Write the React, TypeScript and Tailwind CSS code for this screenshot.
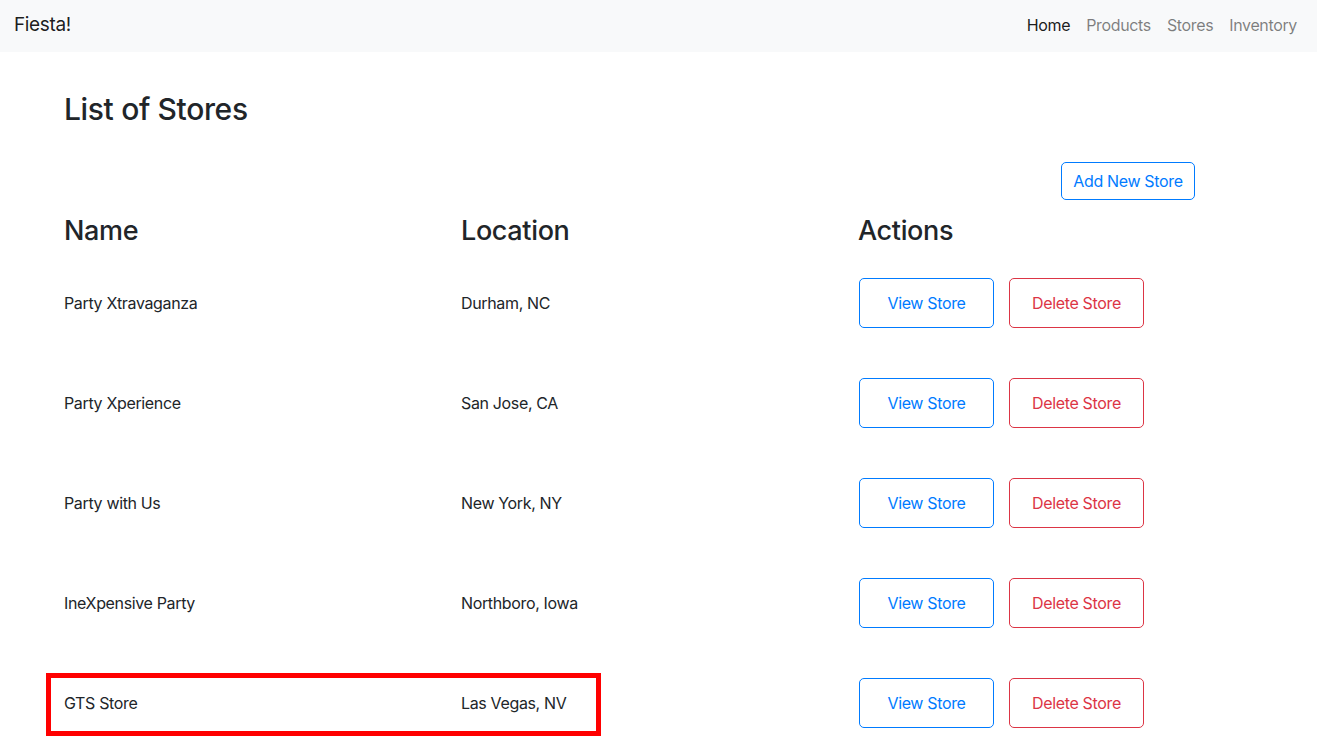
import React from "react";

const stores = [
  { name: "Party Xtravaganza", location: "Durham, NC" },
  { name: "Party Xperience", location: "San Jose, CA" },
  { name: "Party with Us", location: "New York, NY" },
  { name: "IneXpensive Party", location: "Northboro, Iowa" },
  { name: "GTS Store", location: "Las Vegas, NV" },
];

const navLinks = ["Home", "Products", "Stores", "Inventory"];

export default function App() {
  return (
    <div className="relative min-h-[741px] bg-white text-[#212529] tracking-[-0.022em] font-['Inter','Liberation_Sans',sans-serif]">
      <nav className="h-[52px] bg-[#f8f9fa] flex items-center justify-between pl-[14px] pr-[12px] pb-[2px]">
        <span className="text-[19px] text-black/90">Fiesta!</span>
        <ul className="flex items-center">
          {navLinks.map((link, i) => (
            <li
              key={link}
              className={`px-2 text-[16px] ${i === 0 ? "text-black/90" : "text-black/50"}`}
            >
              {link}
            </li>
          ))}
        </ul>
      </nav>

      <main className="pl-[64px]">
        <h2 className="mt-[38px] h-[38px] text-[30px] font-medium leading-[38px]">List of Stores</h2>

        <div className="mt-[34px] w-[1131px] flex justify-end">
          <button className="h-[38px] w-[134px] rounded-[5px] border border-[#007bff] text-[#007bff] text-[16px]">
            Add New Store
          </button>
        </div>

        <div className="mt-[11px] grid grid-cols-[397px_397px_auto] h-[34px] items-center text-[27px] font-medium">
          <h3>Name</h3>
          <h3>Location</h3>
          <h3>Actions</h3>
        </div>

        <div className="mt-[8px]">
          {stores.map((s) => (
            <div key={s.name} className="grid grid-cols-[397px_397px_auto] h-[100px] items-center text-[16px]">
              <span>{s.name}</span>
              <span>{s.location}</span>
              <div className="flex gap-[15px] pl-px">
                <button className="h-[50px] w-[135px] rounded-[5px] border border-[#007bff] text-[#007bff]">
                  View Store
                </button>
                <button className="h-[50px] w-[135px] rounded-[5px] border border-[#dc3545] text-[#dc3545]">
                  Delete Store
                </button>
              </div>
            </div>
          ))}
        </div>
      </main>

      <div className="absolute left-[46px] top-[673px] w-[555px] h-[63px] border-[5px] border-[#ff0000] pointer-events-none" />
    </div>
  );
}
